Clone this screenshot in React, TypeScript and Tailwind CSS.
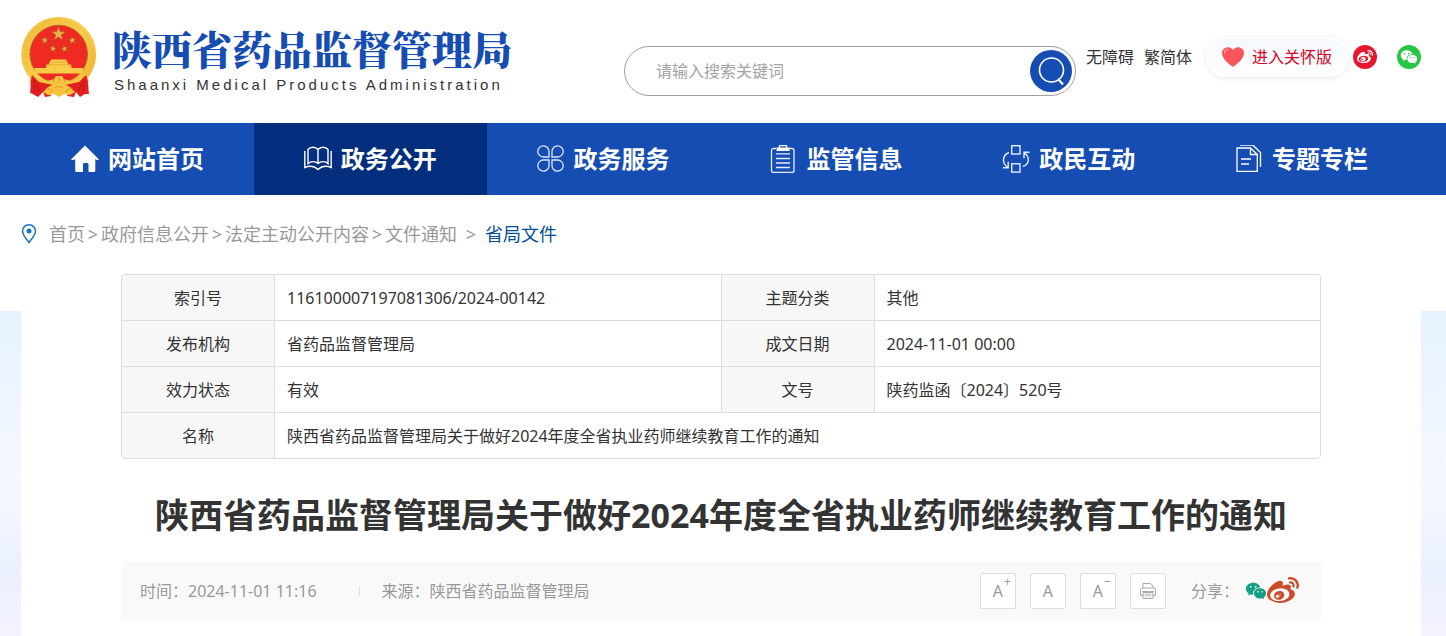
import { useState } from "react";
import type { ReactNode } from "react";
import { FaWeibo } from "react-icons/fa";
import { RiWechatFill } from "react-icons/ri";

const star = (cx: number, cy: number, r: number, turn = 0) =>
  Array.from({ length: 10 }, (_, i) => {
    const radius = i % 2 ? r * 0.4 : r;
    const angle = ((i * 36 - 90 + turn) * Math.PI) / 180;
    return `${(cx + radius * Math.cos(angle)).toFixed(2)},${(cy + radius * Math.sin(angle)).toFixed(2)}`;
  }).join(" ");

const Emblem = () => (
  <svg viewBox="21 17 76 81" className="h-[81px] w-[76px] shrink-0" aria-hidden="true">
    <defs>
      <linearGradient id="gold" x1="0" y1="0" x2="1" y2="1">
        <stop offset="0" stopColor="#f0b83a" />
        <stop offset="0.5" stopColor="#f8cf4d" />
        <stop offset="1" stopColor="#eeb02f" />
      </linearGradient>
    </defs>
    <circle cx="58.7" cy="54.5" r="37.5" fill="url(#gold)" />
    <circle cx="58.7" cy="54.5" r="33.5" fill="none" stroke="#e2a22c" strokeWidth="3" strokeDasharray="1 2.4" opacity="0.3" />
    <circle cx="58.7" cy="54" r="28.8" fill="#ee2a23" stroke="#b8641c" strokeWidth="0.9" />
    <g fill="#e9b04a" stroke="#a8501a" strokeWidth="0.5">
      <polygon points={star(58.5, 34, 7.4)} />
      <polygon points={star(44.7, 40.3, 4, 10)} />
      <polygon points={star(72.3, 40.3, 4, -10)} />
      <polygon points={star(53, 48.7, 3.8, 15)} />
      <polygon points={star(64.5, 48.7, 3.8, -15)} />
    </g>
    <path fill="#f9cc48" d="M51 59.5h15l1 2.5H50zM49 62h19v2.6H49zM46.500 64.600h24.500l.6 3.400H46z" />
    <path fill="#f9cc48" d="M34 68h49.500l-2 5.600H36z" />
    <path stroke="#d98e22" strokeWidth="0.5" d="M50 62.200h18M47 64.800h24" />
    <path fill="#f7c640" d="M33 73c6 8 13 9.500 21 6l2-3h6l2 3c8 3.500 15 2 21-6l4 8-9 6c-8-1-14-1-17-3h-8c-4 3-10 3-17 3l-9-5z" />
    <path fill="#e3201f" d="M32 75l7 7 14 3-5 4 3 7-6 1-2-5-5 5-7-4-1 1c1-7 0-12 2-19z" />
    <path fill="#e3201f" d="M86 75l-7 7-14 3 5 4-3 7 7 1 2-5 4 5 5-3 4 0c-1-7 0-12-3-19z" />
    <path fill="none" stroke="#b01216" strokeWidth="0.8" d="M34 79l1 13M37 84l2 8M84 79l-1 13M81 84l-3 8" />
    <path fill="#f6c33a" d="M54 84c2-3 8-3 10 0l6 3 5 5-5 3-6-1-5 3-5-3-6 1-5-3 5-5z" />
    <path fill="none" stroke="#d48420" strokeWidth="0.7" d="M48 88l5 4M70 88l-5 4M55 88c2-2 6-2 8 0M55 78l-2 4M59 77v5M63 78l2 4" />
  </svg>
);

const HomeIcon = () => (
  <svg viewBox="0 0 28 28" className="size-7" fill="#fff" aria-hidden="true">
    <path d="M14 .5 28 14.500c-1.500 1-2.500.6-3.700-.4V25.500c0 1-.6 1.500-1.500 1.500h-5.300v-7.500c0-1-.5-1.500-1.500-1.500h-2.500c-1 0-1.500.5-1.500 1.500V27H5.700c-1 0-1.500-.5-1.500-1.500V14.200C3 15 1.500 15.500 0 14.500z" />
  </svg>
);

const BookIcon = () => (
  <svg viewBox="0 0 28 28" className="size-7" fill="none" stroke="#fff" strokeWidth="1.4" aria-hidden="true">
    <path d="M14 4.500c-2.500-3-7.500-3-10 0v14c2.500-2.500 7.500-2.500 10 0 2.500-2.500 7.500-2.500 10 0v-14c-2.500-3-7.500-3-10 0zM14 4.500v14" />
    <path d="M.8 6v16.500c5-2 9.500-1.500 13.200 2 3.700-3.500 8.200-4 13.200-2V6" />
  </svg>
);

const CloverIcon = () => (
  <svg viewBox="0 0 28 28" className="size-7" fill="none" stroke="#dce6fa" strokeWidth="1.300" aria-hidden="true">
    <path d="M12 12H6.500A5.600 5.600 0 1 1 12 6.500zM15 12h5.500A5.600 5.600 0 1 0 15 6.500zM12 15H6.500a5.600 5.600 0 1 0 5.500 5.500zM15 15h5.500a5.600 5.600 0 1 1-5.500 5.500z" />
  </svg>
);

const ClipboardIcon = () => (
  <svg viewBox="0 0 28 28" className="size-7" fill="none" stroke="#e6edfc" strokeWidth="1.300" aria-hidden="true">
    <path d="M7 3.500H4.500a2 2 0 0 0-2 2v20a2 2 0 0 0 2 2h18.500a2 2 0 0 0 2-2v-20a2 2 0 0 0-2-2h-2.500" />
    <path fill="#fff" stroke="none" d="M10 0h8l.5 2.500h2v3.500h-13V2.500h2zM11 1.200l-.3 1.300h6.500L17 1.200z" fillRule="evenodd" />
    <path d="M7 8.800h14M7 13.500h14M7 18h14M7 22.500h14" />
  </svg>
);

const ExchangeIcon = () => (
  <svg viewBox="0 0 28 28" className="size-7" fill="none" stroke="#e6edfc" strokeWidth="1.400" aria-hidden="true">
    <rect x="9.700" y=".7" width="8.300" height="8.300" />
    <rect x="9.700" y="18.800" width="8.300" height="8.300" />
    <path d="M7 7.500C.5 10-.5 18 5.500 22M.8 22.700h5.400v-6M21 21.500c6-2 7.500-9 1.500-13.500M27.500 7.300h-5.500v6" />
  </svg>
);

const PagesIcon = () => (
  <svg viewBox="0 0 28 28" className="size-7" fill="none" stroke="#fff" strokeWidth="1.300" aria-hidden="true">
    <path d="M15.500 3H2v23.300h20.300V9.500zM15.500 3v6.500h6.800M6 14h10M6 19h8" />
    <path d="M5 .2h13l7.500 7.300v14.500" />
  </svg>
);

type NavItemProps = {
  label: string;
  icon: ReactNode;
  active?: boolean;
};

const navItems: NavItemProps[] = [
  { label: "网站首页", icon: <HomeIcon /> },
  { label: "政务公开", icon: <BookIcon />, active: true },
  { label: "政务服务", icon: <CloverIcon /> },
  { label: "监管信息", icon: <ClipboardIcon /> },
  { label: "政民互动", icon: <ExchangeIcon /> },
  { label: "专题专栏", icon: <PagesIcon /> },
];

const NavItem = ({ label, icon, active }: NavItemProps) => (
  <a
    href="#"
    className={`flex h-[72px] flex-1 items-center justify-center gap-[9px] text-2xl font-bold text-white ${
      active ? "bg-[#032e7e]" : ""
    }`}
  >
    {icon}
    <span>{label}</span>
  </a>
);

const crumbs = ["首页", "政府信息公开", "法定主动公开内容", "文件通知"];

const details = [
  ["索引号", "116100007197081306/2024-00142", "主题分类", "其他"],
  ["发布机构", "省药品监督管理局", "成文日期", "2024-11-01 00:00"],
  ["效力状态", "有效", "文号", "陕药监函〔2024〕520号"],
];

const title = "陕西省药品监督管理局关于做好2024年度全省执业药师继续教育工作的通知";

const headCell = "w-[153px] border-r border-b border-[#ddd] bg-[#f7f7f7] text-center font-normal";
const dataCell = "border-r border-b border-[#ddd] px-3";

const toolButton =
  "flex size-9 items-center justify-center rounded-xs border border-[#ddd] bg-white text-base";

const Header = () => {
  const [keyword, setKeyword] = useState("");

  return (
    <header className="flex h-[123px] items-start justify-between bg-white pr-[25px] pl-[21px]">
      <a href="#" className="flex gap-[15px] pt-[17px]">
        <Emblem />
        <span className="flex flex-col pt-[6px]">
          <span className="font-['Noto_Serif_CJK_SC','Noto_Sans_CJK_SC',serif] text-[40px] leading-[50px] font-black text-[#164db2]">
            陕西省药品监督管理局
          </span>
          <span className="pl-[2px] font-['Liberation_Sans',sans-serif] text-[15px] leading-6 tracking-[3px] whitespace-nowrap text-[#333]">
            Shaanxi Medical Products Administration
          </span>
        </span>
      </a>

      <div className="flex pt-[37px]">
        <form
          className="mt-[9px] flex h-[50px] w-[452px] items-center rounded-full border border-[#a0a0a0] pr-[3px] pl-[31px]"
          onSubmit={(e) => e.preventDefault()}
        >
          <input
            type="text"
            aria-label="请输入搜索关键词"
            placeholder="请输入搜索关键词"
            value={keyword}
            onChange={(e) => setKeyword(e.target.value)}
            className="min-w-0 flex-1 text-base outline-none placeholder:text-[#a3a3a3]"
          />
          <button type="submit" aria-label="搜索" className="size-[42px] rounded-full bg-[#164db2]">
            <svg viewBox="0 0 42 42" fill="none" stroke="#fff" strokeWidth="1.600" aria-hidden="true">
              <circle cx="21.500" cy="20" r="12" />
              <path d="m28 29 5 5.500" strokeWidth="2.200" />
            </svg>
          </button>
        </form>

        <div className="flex h-10 items-center pl-[10px] text-base text-[#333]">
          <a href="#">无障碍</a>
          <a href="#" className="pl-[10px]">繁简体</a>
          <a
            href="#"
            className="ml-[14px] flex h-10 w-[143px] items-center gap-2 rounded-full bg-linear-to-b from-[#f5f8fc] to-white pl-4 text-[#d80024] shadow-[0_1px_5px_1px_#eceef5] ring-2 ring-white ring-inset"
          >
            <svg viewBox="0 0 22 20" className="h-5 w-[22px]" aria-hidden="true">
              <path fill="#fa5558" d="M11 20C7 17 0 12 0 6 0 .5 7.500-2 11 3c3.500-5 11-2.500 11 3 0 6-7 11-11 14z" />
              <path fill="none" stroke="#fda5a5" strokeWidth="1.300" strokeLinecap="round" d="M2.500 6c0-2 1.500-3.500 3.500-3.700" />
            </svg>
            进入关怀版
          </a>
          <a href="#" aria-label="微博" className="ml-1 flex size-6 items-center justify-center rounded-full bg-[#e6162d] text-white">
            <FaWeibo className="size-4" />
          </a>
          <a href="#" aria-label="微信" className="ml-5 flex size-6 items-center justify-center rounded-full bg-[#28c445] text-white">
            <RiWechatFill className="size-[18px]" />
          </a>
        </div>
      </div>
    </header>
  );
};

const Breadcrumb = () => (
  <nav aria-label="当前位置" className="flex h-[77px] items-center text-lg text-[#999]">
    <svg viewBox="0 0 16 20" className="mr-3 h-5 w-4" fill="none" stroke="#1b74c0" strokeWidth="1.500" aria-hidden="true">
      <path d="M8 18.500C5 14.500 1.500 11 1.500 7a6.500 6.200 0 0 1 13 0c0 4-3.500 7.500-6.500 11.500z" />
      <circle cx="8" cy="7" r="2.500" fill="#1b74c0" stroke="none" />
    </svg>
    {crumbs.map((crumb, i) => (
      <span key={crumb} className="flex">
        <a href="#">{crumb}</a>
        <span className={i === crumbs.length - 1 ? "w-7 text-center" : "w-4 text-center"}>&gt;</span>
      </span>
    ))}
    <a href="#" className="text-[#024f93]">省局文件</a>
  </nav>
);

const DetailTable = () => (
  <table className="w-full table-fixed border-separate border-spacing-0 overflow-hidden rounded-sm border-t border-l border-[#ddd] text-base text-[#333]">
    <tbody>
      {details.map(([name, value, otherName, otherValue]) => (
        <tr key={name} className="h-[46px]">
          <th scope="row" className={headCell}>{name}</th>
          <td className={dataCell}>{value}</td>
          <th scope="row" className={headCell}>{otherName}</th>
          <td className={dataCell}>{otherValue}</td>
        </tr>
      ))}
      <tr className="h-[46px]">
        <th scope="row" className={`${headCell} rounded-bl-sm`}>名称</th>
        <td colSpan={3} className={`${dataCell} rounded-br-sm`}>{title}</td>
      </tr>
    </tbody>
  </table>
);

const ArticleBar = () => (
  <div className="flex h-[60px] items-center bg-[#f9f9f9] pr-[22px] pl-[19px] text-base text-[#999]">
    <span>时间：2024-11-01 11:16</span>
    <span className="mr-[22px] ml-[42px] h-[10px] w-px bg-[#ddd]" />
    <span>来源：陕西省药品监督管理局</span>

    <div className="ml-auto flex items-center gap-[14px]">
      <button type="button" className={`${toolButton} relative`}>
        A<span className="absolute top-0 right-1 text-xs leading-4">+</span>
      </button>
      <button type="button" className={toolButton}>A</button>
      <button type="button" className={`${toolButton} relative`}>
        A<span className="absolute top-0 right-1 text-xs leading-4">−</span>
      </button>
      <button type="button" aria-label="打印" className={toolButton}>
        <svg viewBox="0 0 18 18" className="size-[18px]" fill="none" stroke="#aaa" aria-hidden="true">
          <path d="M4 6V1.500h7.500L14 4v2M4 13.500H1.500v-6A1.500 1.500 0 0 1 3 6h12a1.500 1.500 0 0 1 1.500 1.500v6H14" />
          <path fill="#eee" d="M4 10.500h10v6H4z" />
          <path d="M3 9.500h12M6 13h6" />
        </svg>
      </button>
    </div>

    <span className="ml-[25px]">分享：</span>
    <a href="#" aria-label="分享到微信" className="ml-[6px]">
      <RiWechatFill className="size-[22px] text-[#15a085]" />
    </a>
    <a href="#" aria-label="分享到微博">
      <FaWeibo className="size-8 text-[#cf4a2b]" />
    </a>
  </div>
);

const App = () => (
  <div
    lang="zh-CN"
    className="flex min-h-screen flex-col bg-white bg-[linear-gradient(180deg,#e6f2ff_0,#eef5ff_90px,#f5f8ff_180px,#eaf0ff_260px,#f5f3ff_325px)] bg-[position:0_311px] bg-no-repeat font-['Noto_Sans','Noto_Sans_CJK_SC',sans-serif]"
  >
    <Header />

    <nav aria-label="主导航" className="flex bg-[#164db2] pr-[28px] pl-[21px]">
      {navItems.map((item) => (
        <NavItem key={item.label} {...item} />
      ))}
    </nav>

    <main className="mr-[25px] ml-[21px] flex-1 bg-white">
      <Breadcrumb />
      <div className="px-[100px] pt-[2px]">
        <DetailTable />
        <h1 className="pt-8 pb-[22px] text-center text-[34px] leading-[48px] font-bold whitespace-nowrap text-[#333]">
          {title}
        </h1>
        <ArticleBar />
      </div>
    </main>
  </div>
);

export default App;
